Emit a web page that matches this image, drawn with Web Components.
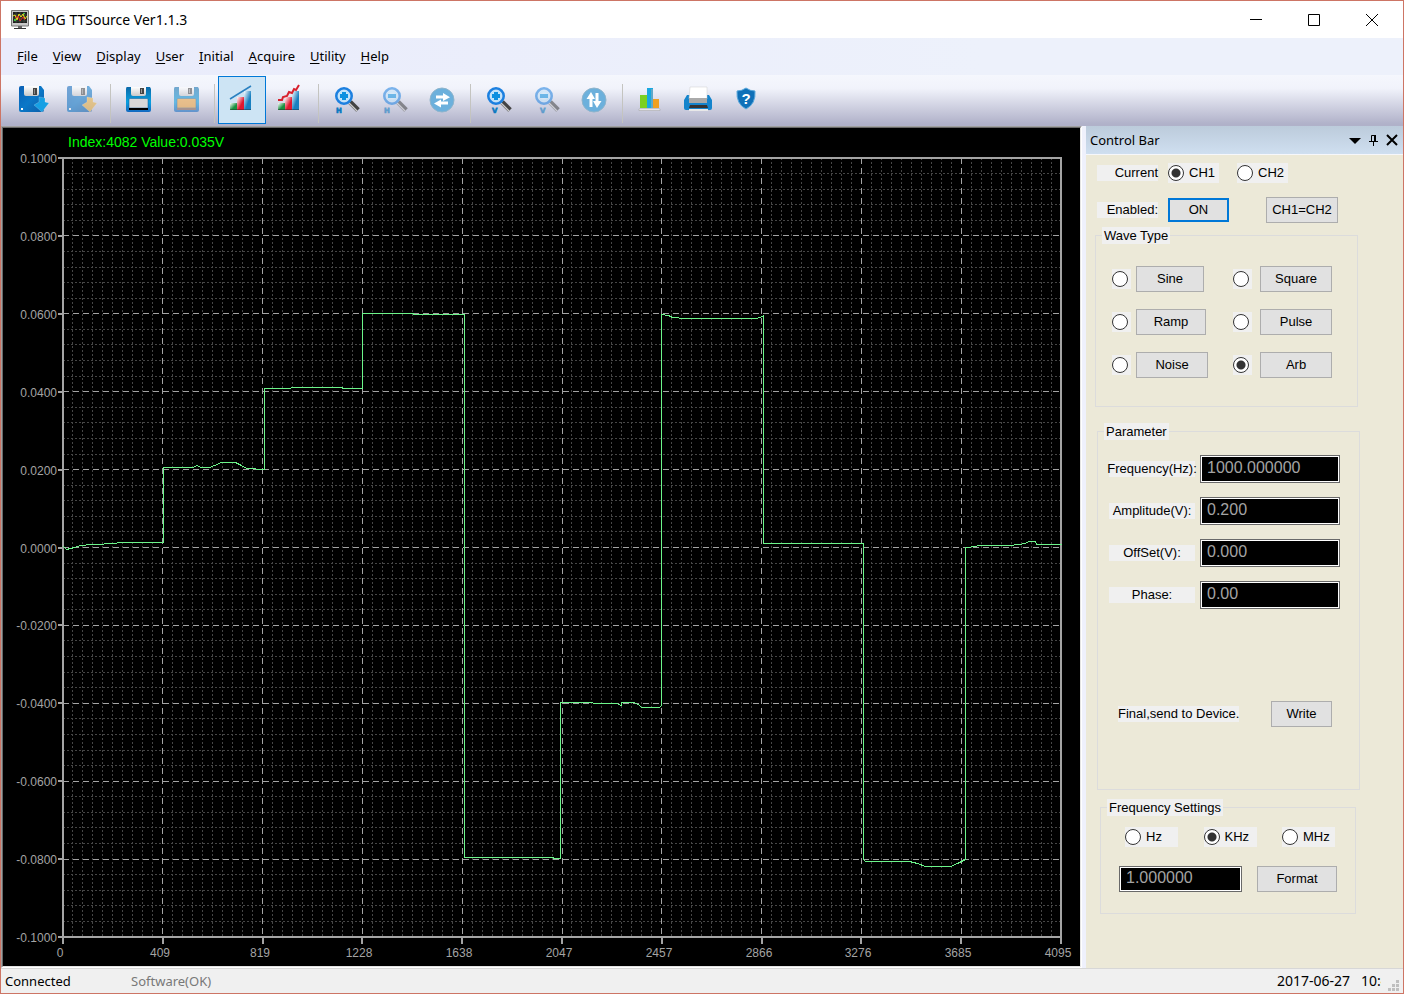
<!DOCTYPE html>
<html lang="en">
<head>
<meta charset="utf-8">
<title>HDG TTSource Ver1.1.3</title>
<style>
  body { margin: 0; }
</style>
</head>
<body>

<tts-window>
  <title-bar slot="title">HDG TTSource Ver1.1.3</title-bar>
  <menu-bar slot="menu"></menu-bar>
  <tool-bar slot="tools"></tool-bar>
  <wave-chart slot="view"></wave-chart>
  <control-bar slot="dock"></control-bar>
  <status-bar slot="status">
    <span>Connected</span>
    <span slot="mode">Software(OK)</span>
    <span slot="clock">2017-06-27&nbsp;&nbsp; 10:4</span>
  </status-bar>
</tts-window>

<template id="tts-window">
  <style>
    :host {
      display: flex;
      flex-direction: column;
      box-sizing: border-box;
      min-height: 100vh;
      border: 1px solid #cd7565;
      background: #eff1fc;
      color: #000;
      font: 14px/20px "Noto Sans", "Open Sans", sans-serif;
    }
    .work { display: flex; flex: 1; gap: 4px; }
    ::slotted([slot=view]) { flex: 1; min-width: 0; }
  </style>
  <slot name="title"></slot>
  <slot name="menu"></slot>
  <slot name="tools"></slot>
  <div class="work">
    <slot name="view"></slot>
    <slot name="dock"></slot>
  </div>
  <slot name="status"></slot>
</template>

<template id="title-bar">
  <style>
    :host {
      display: flex;
      align-items: center;
      height: 37px;
      padding: 0 2px 0 10px;
      background: #fff;
      font-size: 14px;
    }
    h1 { flex: 1; margin: 0 0 0 6px; font: inherit; }
    svg { display: block; }
    button { display: grid; place-items: center; width: 58px; height: 36px; padding: 0; border: 0; background: none; }
    button:hover { background: #e5e5e5; }
  </style>
  <svg width="18" height="20" viewBox="0 0 18 20">
    <path fill="#c8c8c8" stroke="#777" d="M.5.5h17v15.500h-17z"/>
    <path fill="#1d1d1d" d="M2 2h14v11H2z"/>
    <path stroke="#5b6b5b" stroke-width=".5" d="M2 5h14M2 8h14M2 11h14M5 2v11M9 2v11M13 2v11"/>
    <path fill="none" stroke="#e8e020" d="M2 6l2-1 2 5 2-6 2 3 2-3 2 5 2-3"/>
    <path fill="none" stroke="#e02020" d="M4 8l3-2 2 5 3-4 2 3"/>
    <path fill="#40c040" d="M3 9h2v2H3zM12 3h2v1h-2z"/>
    <path fill="#666" d="M7 16h4v2H7z"/>
    <path fill="#333" d="M3 18h12v1H3z"/>
  </svg>
  <h1><slot></slot></h1>
  <button aria-label="Minimize"><svg width="12" height="12"><path stroke="#000" d="M0 5.500h12"/></svg></button>
  <button aria-label="Maximize"><svg width="12" height="12"><path fill="none" stroke="#000" d="M.5.5h11v11H.5z"/></svg></button>
  <button aria-label="Close"><svg width="12" height="12"><path stroke="#000" d="M0 0l12 12M12 0L0 12"/></svg></button>
</template>

<template id="menu-bar">
  <style>
    :host { display: block; background: linear-gradient(90deg, #e9ebfb, #edf1fb 70%); }
    nav { display: flex; gap: 15px; height: 35px; padding: 0 16px 2px; }
    button { padding: 0; border: 0; background: none; color: inherit; font: 13px/20px "Noto Sans", "Open Sans", sans-serif; }
    button:hover { background: #d5dcf5; }
    u { text-underline-offset: 2px; }
  </style>
  <nav>
    <button><u>F</u>ile</button>
    <button><u>V</u>iew</button>
    <button><u>D</u>isplay</button>
    <button><u>U</u>ser</button>
    <button><u>I</u>nitial</button>
    <button><u>A</u>cquire</button>
    <button><u>U</u>tility</button>
    <button><u>H</u>elp</button>
  </nav>
</template>

<template id="tool-bar">
  <style>
    :host {
      display: flex;
      box-sizing: border-box;
      height: 51px;
      padding: 1px 9px;
      background: linear-gradient(#f5f7fd, #f1f3fb 26%, #b0b1c9 96%);
    }
    hr { width: 1px; height: 39px; margin: 8px 3px 0 4px; border: 0; background: #c4c4c0; }
  </style>
  <tool-button icon="open" label="Open"></tool-button>
  <tool-button icon="openTo" label="Open to device"></tool-button>
  <hr>
  <tool-button icon="save" label="Save"></tool-button>
  <tool-button icon="saveAs" label="Save as"></tool-button>
  <hr>
  <tool-button icon="line" label="Line" active></tool-button>
  <tool-button icon="curve" label="Curve"></tool-button>
  <hr>
  <tool-button icon="zoomInH" label="Zoom in H"></tool-button>
  <tool-button icon="zoomOutH" label="Zoom out H"></tool-button>
  <tool-button icon="fitH" label="Fit H"></tool-button>
  <hr>
  <tool-button icon="zoomInV" label="Zoom in V"></tool-button>
  <tool-button icon="zoomOutV" label="Zoom out V"></tool-button>
  <tool-button icon="fitV" label="Fit V"></tool-button>
  <hr>
  <tool-button icon="bars" label="Measure"></tool-button>
  <tool-button icon="print" label="Print"></tool-button>
  <tool-button icon="help" label="Help"></tool-button>
</template>

<template id="tool-button">
  <style>
    :host { display: block; }
    button { display: block; box-sizing: border-box; width: 48px; height: 48px; padding: 0; border: 0; background: none; }
    button:hover { background: #e0eefa; }
    :host([active]) button { background: #cde4f4; box-shadow: inset 0 0 0 1px #0078d7; }
    svg { display: block; }
  </style>
  <button></button>
</template>

<template id="wave-chart">
  <style>
    :host {
      display: block;
      position: relative;
      border: 1px solid;
      border-color: #a0a0a0 #fff #fff #a0a0a0;
      min-height: 400px;
    }
    /* out of flow, so that the drawing never props the pane open */
    svg {
      position: absolute;
      inset: 0;
      box-sizing: border-box;
      width: 100%;
      height: 100%;
      border: 1px solid;
      border-color: #696969 #e3e3e3 #e3e3e3 #696969;
      background: #000;
    }
    text { font: 12px "Liberation Sans", Arial, sans-serif; fill: #a4a4a4; }
    .readout { font-size: 14px; fill: #00ff00; }
    .minor { stroke: #464646; stroke-dasharray: 2 2; }
    .major { stroke: #a4a4a4; stroke-dasharray: 6 4; }
    .axis { fill: none; stroke: #a4a4a4; stroke-width: 2; }
    .trace { fill: none; stroke: #6cf58a; }
    .minor, .major, .axis, .trace { shape-rendering: crispEdges; }
  </style>
  <svg></svg>
</template>

<template id="control-bar">
  <style>
    :host { display: block; width: 317px; background: #ece9d8; font: 13px/16px "Liberation Sans", Arial, sans-serif; }
    header {
      display: flex;
      align-items: center;
      gap: 8px;
      height: 28px;
      padding: 0 5px 0 4px;
      border-bottom: 1px solid #f6f7fb;
      background: linear-gradient(#bccbdb, #cfdff0);
    }
    h2 { flex: 1; margin: 0; font: 13px/20px "Noto Sans", "Open Sans", sans-serif; }
    header button { padding: 0; border: 0; background: none; }
    header svg { display: block; }

    form { display: flex; flex-direction: column; padding: 8px 0 0 9px; }
    .channel { display: grid; grid-template-columns: 61px 61px 80px; gap: 14px 10px; align-items: center; margin-left: 2px; }
    .channel .right { margin-left: -2px; }
    .channel .swap { margin-left: 27px; margin-right: -19px; }
    .tag { background: #f0f0f0; text-align: right; }
    .option { display: inline-flex; align-items: center; gap: 5px; height: 20px; padding-right: 4px; background: #f0f0f0; justify-self: start; white-space: nowrap; }
    input[type=radio] {
      appearance: none;
      box-sizing: border-box;
      width: 16px;
      height: 16px;
      margin: 0;
      border: 1px solid #333;
      border-radius: 50%;
      background: #fff;
      outline: 0;
    }
    input[type=radio]:checked { background: radial-gradient(circle, #333 4px, #fff 5px); }
    input.field {
      box-sizing: border-box;
      width: 140px;
      height: 28px;
      padding: 0 6px 3px;
      border: 1px solid #696969;
      outline: 1px solid #fff;
      outline-offset: -2px;
      background: #000;
      color: #a4a4a4;
      font: 16px/20px "Liberation Sans", Arial, sans-serif;
    }

    .wave { width: 263px; height: 180px; margin-top: 4px; }
    .wave .grid { display: grid; grid-template-columns: 24px 97px 27px 72px; gap: 17px 0; align-items: center; padding: 22px 0 0 16px; }
    .wave .dot { display: flex; width: 19px; height: 20px; align-items: center; background: #f0f0f0; }
    .wave push-button { justify-self: start; width: 72px; }
    .wave .sine { width: 68px; }
    .wave .ramp { width: 70px; }

    .param { width: 263px; height: 367px; margin: 16px 0 0 2px; }
    .param .grid { display: grid; grid-template-columns: 86px 140px; gap: 14px 5px; align-items: center; padding: 15px 0 0 11px; }
    .param .tag { display: flex; justify-content: center; white-space: nowrap; }
    .send { display: flex; align-items: center; justify-content: space-between; padding: 92px 27px 0 20px; }
    .send span { background: #f0f0f0; }
    .send push-button { width: 61px; }

    .freq { width: 256px; height: 115px; margin: 9px 0 0 5px; }
    .units { display: flex; justify-content: space-between; padding: 11px 20px 0 24px; }
    .units .option { box-sizing: border-box; width: 53px; }
    .format { display: flex; align-items: center; justify-content: space-between; padding: 19px 18px 0; }
    .format .field { width: 123px; height: 26px; }
    .format push-button { width: 80px; }
  </style>
  <header>
    <h2>Control Bar</h2>
    <button aria-label="Menu"><svg width="12" height="8"><path d="M0 2h12L6 8z"/></svg></button>
    <button aria-label="Pin"><svg width="9" height="12"><path fill="none" stroke="#000" d="M2.500 7V1.500h4V7M0 7.500h9M4.500 8v4"/><path d="M5 1h2v6H5z"/></svg></button>
    <button aria-label="Close"><svg width="12" height="12"><path stroke="#000" stroke-width="2" d="M1 1l10 10M11 1L1 11"/></svg></button>
  </header>
  <form>
    <div class="channel">
      <span class="tag">Current</span>
      <label class="option"><input type="radio" name="channel" checked>CH1</label>
      <label class="option right"><input type="radio" name="channel">CH2</label>
      <span class="tag">Enabled:</span>
      <push-button focused>ON</push-button>
      <push-button class="swap">CH1=CH2</push-button>
    </div>

    <group-box class="wave" caption="Wave Type">
      <div class="grid">
        <span class="dot"><input type="radio" name="wave" aria-label="Sine"></span>
        <push-button class="sine">Sine</push-button>
        <span class="dot"><input type="radio" name="wave" aria-label="Square"></span>
        <push-button>Square</push-button>
        <span class="dot"><input type="radio" name="wave" aria-label="Ramp"></span>
        <push-button class="ramp">Ramp</push-button>
        <span class="dot"><input type="radio" name="wave" aria-label="Pulse"></span>
        <push-button>Pulse</push-button>
        <span class="dot"><input type="radio" name="wave" aria-label="Noise"></span>
        <push-button>Noise</push-button>
        <span class="dot"><input type="radio" name="wave" aria-label="Arb" checked></span>
        <push-button>Arb</push-button>
      </div>
    </group-box>

    <group-box class="param" caption="Parameter">
      <div class="grid">
        <label class="tag" for="frequency">Frequency(Hz):</label>
        <input class="field" id="frequency" value="1000.000000">
        <label class="tag" for="amplitude">Amplitude(V):</label>
        <input class="field" id="amplitude" value="0.200">
        <label class="tag" for="offset">OffSet(V):</label>
        <input class="field" id="offset" value="0.000">
        <label class="tag" for="phase">Phase:</label>
        <input class="field" id="phase" value="0.00">
      </div>
      <div class="send">
        <span>Final,send to Device.</span>
        <push-button>Write</push-button>
      </div>
    </group-box>

    <group-box class="freq" caption="Frequency Settings">
      <div class="units">
        <label class="option"><input type="radio" name="unit">Hz</label>
        <label class="option"><input type="radio" name="unit" checked>KHz</label>
        <label class="option"><input type="radio" name="unit">MHz</label>
      </div>
      <div class="format">
        <input class="field" aria-label="Frequency" value="1.000000">
        <push-button>Format</push-button>
      </div>
    </group-box>
  </form>
</template>

<template id="group-box">
  <style>
    :host { display: block; }
    fieldset { box-sizing: border-box; height: 100%; min-width: 0; margin: 0; padding: 0; border: 1px solid #dcdcdc; }
    legend { margin-left: 6px; padding: 0 2px; background: #f0f0f0; line-height: 17px; }
  </style>
  <fieldset><legend></legend><slot></slot></fieldset>
</template>

<template id="push-button">
  <style>
    :host { display: block; }
    button {
      display: block;
      box-sizing: border-box;
      width: 100%;
      height: 26px;
      padding: 0;
      border: 1px solid #adadad;
      background: #e1e1e1;
      color: inherit;
      font: inherit;
      white-space: nowrap;
    }
    button:hover { background: #e5f1fb; }
    :host([focused]) button { height: 24px; border: 2px solid #0078d7; }
  </style>
  <button type="button"><slot></slot></button>
</template>

<template id="status-bar">
  <style>
    :host {
      display: flex;
      align-items: center;
      height: 24px;
      padding: 0 4px;
      border-top: 1px solid #d7d7d7;
      background: #f0f0f0;
      font: 13px/20px "Noto Sans", "Open Sans", sans-serif;
      white-space: nowrap;
    }
    .state { width: 126px; }
    .mode { flex: 1; color: #787878; }
    .clock { width: 104px; margin-right: 7px; overflow: hidden; font-size: 14px; }
    svg { align-self: flex-end; margin-bottom: 2px; fill: #bfbfbf; }
  </style>
  <div class="state"><slot></slot></div>
  <div class="mode"><slot name="mode"></slot></div>
  <div class="clock"><slot name="clock"></slot></div>
  <svg width="11" height="11"><path d="M8 0h3v3H8zM8 4h3v3H8zM8 8h3v3H8zM4 4h3v3H4zM4 8h3v3H4zM0 8h3v3H0z"/></svg>
</template>

<script>
  (function() {
    let $ = (selector, node = document) => node.querySelector(selector);

    let defs = `<defs>
      <linearGradient id="blue" x2="1" y2="1"><stop stop-color="#0a5fb4"/><stop offset=".5" stop-color="#0b78c8"/><stop offset="1" stop-color="#0d5ea8"/></linearGradient>
      <linearGradient id="cyan" x2="0" y2="1"><stop stop-color="#0b68a8"/><stop offset=".6" stop-color="#08a0e0"/><stop offset="1" stop-color="#1468c0"/></linearGradient>
      <linearGradient id="steel" x2="0" y2="1"><stop stop-color="#fff"/><stop offset="1" stop-color="#c8c8c8"/></linearGradient>
      <linearGradient id="g" x2="1" y2="1"><stop stop-color="#fff"/><stop offset=".6" stop-color="#189040"/></linearGradient>
      <linearGradient id="r" x2="1" y2="1"><stop stop-color="#fff"/><stop offset=".6" stop-color="#e01830"/></linearGradient>
      <linearGradient id="b" x2="1" y2="1"><stop stop-color="#fff"/><stop offset=".6" stop-color="#1880c0"/></linearGradient>
      <radialGradient id="lens"><stop stop-color="#e8f6ff"/><stop offset=".7" stop-color="#b8e0fa"/><stop offset="1" stop-color="#58a8ec"/></radialGradient>
    </defs>`;

    let openDisk = arrow => `
      <path fill="url(#blue)" d="M11 10h20l3 4v20q0 2-2 2H11q-2 0-2-2V12q0-2 2-2z"/>
      <path fill="url(#steel)" d="M14 10h15v8q0 2-2 2H16q-2 0-2-2z"/>
      <path fill="#444" d="M23 12h4v7h-4z"/><path fill="#888" d="M24 13h1v5h-1z"/>
      <path fill="#fff" d="M11 32h2v2h-2z"/>
      <path fill="${arrow}" stroke="#fff" stroke-opacity=".4" stroke-width=".5" d="M29 21l6 1v4l4 1-7 9-8-7 5-3z"/>`;
    let saveDisk = label => `
      <path fill="url(#cyan)" d="M13 11h23l1 2v21q0 2-2 2H14q-2 0-2-2V13q0-2 1-2z"/>
      <path fill="url(#steel)" d="M17 11h15v7q0 2-2 2H19q-2 0-2-2z"/>
      <path fill="#444" d="M26 12h4v6h-4z"/><path fill="#999" d="M27 13h1v4h-1z"/>
      <path fill="${label}" stroke="#0a5a98" stroke-width=".5" d="M16 22.500h17q1 0 1 1V32H15v-8.500q0-1 1-1z"/>`;
    let steps = `
      <path fill="url(#g)" d="M12 27h7v7h-7z"/><path fill="url(#r)" d="M19 21h7v13h-7z"/><path fill="url(#b)" d="M26 15h7v19h-7z"/>
      <path fill="#222" opacity=".4" d="M12 33h21v1H12z"/>`;
    let lens = (sign, axis) => `
      <path stroke="#444" stroke-width="5" d="M28 26l8 8"/><path stroke="#ccc" stroke-width="1.500" d="M27 27l8 8"/>
      <circle cx="22" cy="20" r="7.500" fill="url(#lens)" stroke="#1c80e0" stroke-width="3"/>
      <circle cx="22" cy="20" r="6" fill="none" stroke="#fff" stroke-opacity=".7"/>
      <path stroke="#0c90e0" stroke-width="4" d="${sign}"/>
      <text x="14" y="37" font-family="DejaVu Sans, sans-serif" font-weight="bold" font-size="7" fill="#0878c0" stroke="#0878c0" stroke-width=".6">${axis}</text>`;
    let disc = arrows => `
      <circle cx="24" cy="24" r="12" fill="#6cb0dc" stroke="#8eb4cc"/>
      <path fill="#fff" d="${arrows}"/>`;
    let faded = art => `<g opacity=".55">${art}</g>`;

    let icons = {
      open: openDisk('#16a0e4'),
      openTo: faded(openDisk('#e8b040')),
      save: saveDisk('#d8d8d8') + '<path d="M15 32h19v2H15z"/>',
      saveAs: faded(saveDisk('#f4a840') + '<path fill="#865" d="M15 32h19v2H15z"/>'),
      line: steps + '<path stroke="#2a80c0" stroke-width="1.500" d="M12 23L33 10"/>',
      curve: steps + '<path fill="none" stroke="#d8202c" stroke-width="2" d="M12 24h4l1-3 4-1 2-4 3 1 2-4 2 1 3-5"/>',
      zoomInH: lens('M18 20h8M22 16v8', 'H'),
      zoomOutH: faded(lens('M18 20h8', 'H')),
      fitH: disc('M18 19.500h7v-2.500l7 4.250-7 3.750v-2.500h-7zM30 25.500h-7v-2l-7 4 7 4v-3h7z'),
      zoomInV: lens('M18 20h8M22 16v8', 'V').replace('x="14"', 'x="18"'),
      zoomOutV: faded(lens('M18 20h8', 'V').replace('x="14"', 'x="18"')),
      fitV: disc('M19.500 31v-8h-3l4.500-7 4 7h-2.500v8zM25.500 17v8H23l4 7 4.500-7h-3v-8z'),
      bars: `<path fill="#7cd020" d="M14 19h7v13h-7z"/><path fill="#18a8e0" d="M21 12h6v20h-6z"/><path fill="#f0a020" d="M27 23h6v9h-6z"/>
        <path fill="#60a8c8" d="M25 13h2v19h-2z"/><path fill="#fff" stroke="#999" stroke-width=".5" d="M13 33h21v1.500H13z"/>`,
      print: `<path fill="#1484cc" d="M13 19h22l3 5v8q0 2-2 2H12q-2 0-2-2v-8z"/><path fill="#fff" stroke="#ccc" stroke-width=".5" d="M16 11h17v12H15z"/>
        <path fill="#aaa" d="M15 22h18v5H15z"/><path fill="#333" d="M16 29h17l1 3H15z"/><path fill="#e8e8e8" d="M15 33h19v2H15z"/>`,
      help: `<path fill="#0f70b8" stroke="#5aa8dc" d="M24 12q4 3 9 3 1 13-9 18-10-5-9-18 5 0 9-3z"/>
        <text x="24" y="28" text-anchor="middle" font-family="Liberation Sans, sans-serif" font-weight="bold" font-size="15" fill="#fff">?</text>`
    };

    class ShadowElement extends HTMLElement {
      constructor() {
        super();
        let content = $(`template#${this.localName}`).content.cloneNode(true);
        this.attachShadow({mode: 'open'}).append(content);
      }
    }

    class ToolButton extends ShadowElement {
      connectedCallback() {
        let button = $('button', this.shadowRoot);
        button.setAttribute('aria-label', this.getAttribute('label'));
        button.innerHTML = `<svg width="48" height="48" viewBox="0 0 48 48">${defs}${icons[this.getAttribute('icon')]}</svg>`;
      }
    }

    class GroupBox extends ShadowElement {
      connectedCallback() {
        $('legend', this.shadowRoot).textContent = this.getAttribute('caption');
      }
    }

    // captured points, on a 998 x 779 plot
    let samples = [
      [0,388],[3,391],[7,390],[11,389],[17,387],[29,386],[53,385],[54,384],[99,384],[100,384],
      [100,309],[129,309],[134,307],[137,309],[146,309],[151,307],[158,304],[172,304],[178,307],[183,310],[201,311],
      [201,230],[227,230],[228,229],[278,229],[280,230],[299,230],
      [299,155],[349,155],[351,156],[401,156],
      [401,699],[489,699],[491,700],[497,700],
      [497,544],[529,544],[530,545],[553,545],[558,547],[558,544],[571,544],[576,547],[578,549],[596,549],[598,547],
      [598,156],[605,157],[609,159],[621,160],[692,160],[697,159],[700,157],
      [700,385],[800,385],
      [800,701],[802,703],[846,703],[854,705],[862,708],[887,708],[894,705],[902,701],
      [902,389],[913,388],[914,387],[947,387],[962,385],[965,383],[972,383],[973,386],[998,386]
    ];
    let ticks = [0, 409, 819, 1228, 1638, 2047, 2457, 2866, 3276, 3685, 4095];

    class WaveChart extends ShadowElement {
      connectedCallback() {
        this.observer = new ResizeObserver(() => this.draw());
        this.observer.observe(this);
        this.draw();
      }

      disconnectedCallback() {
        this.observer.disconnect();
      }

      draw() {
        let left = 60, top = 30;
        let w = this.clientWidth - 2 - left - 19;
        let h = this.clientHeight - 2 - top - 29;
        let right = left + w, bottom = top + h;
        let minor = '', major = '', marks = '', labels = '';

        for (let i = 1; i < 100; i++) {
          let x = Math.floor(left + w * i / 100) + .5;
          if (i % 10) minor += `M${x} ${top}V${bottom}`;
          else major += `M${x} ${top}V${bottom}`;
        }
        for (let i = 1; i < 50; i++) {
          let y = Math.floor(top + h * i / 50) + .5;
          if (i % 5) minor += `M${left} ${y}H${right}`;
          else major += `M${left} ${y}H${right}`;
        }
        for (let i = 0; i <= 10; i++) {
          let x = Math.round(left + w * i / 10);
          let y = Math.round(top + h * i / 10);
          marks += `M${left - 5} ${y}H${left}M${x} ${bottom}V${bottom + 7}`;
          labels += `<text x="${left - 6}" y="${y + 5}" text-anchor="end">${(.1 - i * .02).toFixed(4).replace('-0.0000', '0.0000')}</text>`;
          labels += `<text x="${x - 3}" y="${bottom + 20}" text-anchor="middle">${ticks[i]}</text>`;
        }
        let trace = samples.map(([x, y]) => `${left + Math.round(x * w / 998) + .5},${top + Math.round(y * h / 779) + .5}`);

        $('svg', this.shadowRoot).innerHTML = `
          <path class="minor" d="${minor}"/>
          <path class="major" d="${major}"/>
          <path class="axis" d="M${left} ${top}H${right}V${bottom}H${left}z${marks}"/>
          <polyline class="trace" points="${trace.join(' ')}"/>
          <text class="readout" x="${left + 5}" y="19">Index:4082 Value:0.035V</text>
          ${labels}`;
      }
    }

    for (let name of ['tts-window', 'title-bar', 'menu-bar', 'tool-bar', 'control-bar', 'push-button', 'status-bar'])
      customElements.define(name, class extends ShadowElement {});
    customElements.define('tool-button', ToolButton);
    customElements.define('group-box', GroupBox);
    customElements.define('wave-chart', WaveChart);
  })();
</script>
</body>
</html>
